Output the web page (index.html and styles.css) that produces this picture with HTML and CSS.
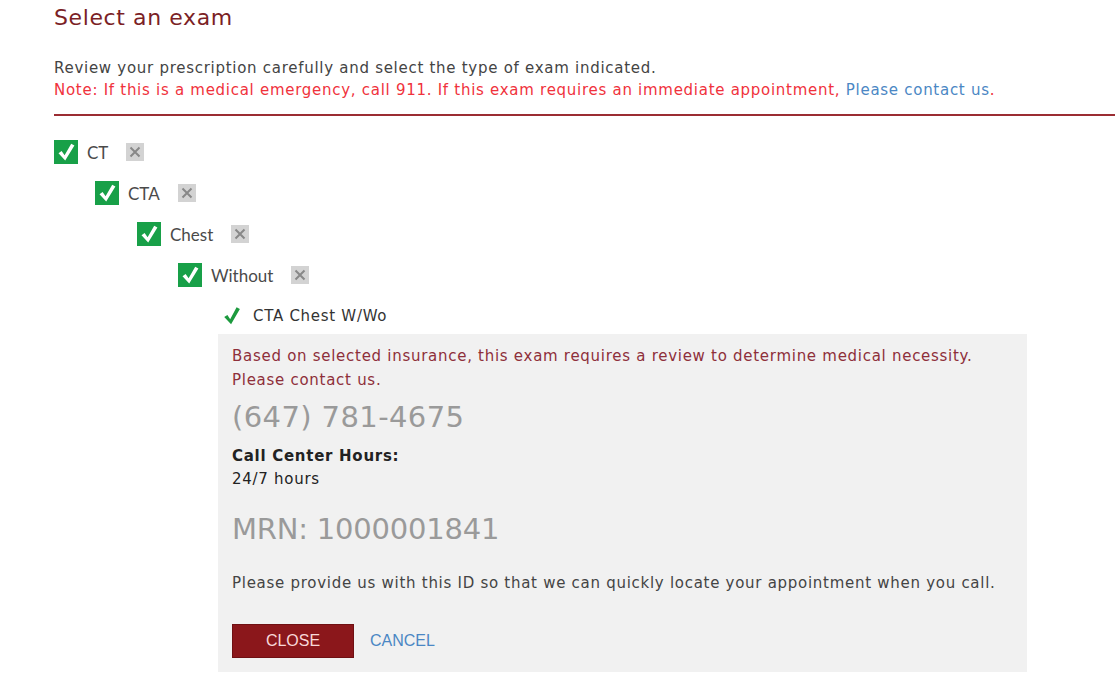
FILE: index.html
```html
<!DOCTYPE html>
<html lang="en">
<head>
    <meta charset="UTF-8">
    <meta name="viewport" content="width=device-width, initial-scale=1.0">
    <title>Select an exam</title>
    <link rel="stylesheet" href="styles.css">
</head>
<body>

    <div id="header">
        <h1>Select an exam</h1>
        <div class="intro">
            <p>Review your prescription carefully and select the type of exam indicated.</p>
            <p class="note">Note: If this is a medical emergency, call 911. If this exam requires an immediate appointment, <a href="#">Please contact us</a>.</p>
        </div>
    </div>

    <div id="tree">
        <div class="row lvl0">
            <span class="box"><svg viewBox="0 0 24 24" width="24" height="24"><path d="M4.5 13.2 L7.6 11 L10.6 15.3 L17.2 3.8 L20.4 5.6 L11.2 20.4 Z" fill="#fff"/></svg></span>
            <span class="label">CT</span>
            <span class="remove"><svg viewBox="0 0 18 18" width="18" height="18"><path d="M4.5 4.5 L13.5 13.5 M13.5 4.5 L4.5 13.5" stroke="#888" stroke-width="2"/></svg></span>
        </div>
        <div class="row lvl1">
            <span class="box"><svg viewBox="0 0 24 24" width="24" height="24"><path d="M4.5 13.2 L7.6 11 L10.6 15.3 L17.2 3.8 L20.4 5.6 L11.2 20.4 Z" fill="#fff"/></svg></span>
            <span class="label">CTA</span>
            <span class="remove"><svg viewBox="0 0 18 18" width="18" height="18"><path d="M4.5 4.5 L13.5 13.5 M13.5 4.5 L4.5 13.5" stroke="#888" stroke-width="2"/></svg></span>
        </div>
        <div class="row lvl2">
            <span class="box"><svg viewBox="0 0 24 24" width="24" height="24"><path d="M4.5 13.2 L7.6 11 L10.6 15.3 L17.2 3.8 L20.4 5.6 L11.2 20.4 Z" fill="#fff"/></svg></span>
            <span class="label">Chest</span>
            <span class="remove"><svg viewBox="0 0 18 18" width="18" height="18"><path d="M4.5 4.5 L13.5 13.5 M13.5 4.5 L4.5 13.5" stroke="#888" stroke-width="2"/></svg></span>
        </div>
        <div class="row lvl3">
            <span class="box"><svg viewBox="0 0 24 24" width="24" height="24"><path d="M4.5 13.2 L7.6 11 L10.6 15.3 L17.2 3.8 L20.4 5.6 L11.2 20.4 Z" fill="#fff"/></svg></span>
            <span class="label">Without</span>
            <span class="remove"><svg viewBox="0 0 18 18" width="18" height="18"><path d="M4.5 4.5 L13.5 13.5 M13.5 4.5 L4.5 13.5" stroke="#888" stroke-width="2"/></svg></span>
        </div>

        <div class="result lvl4">
            <div class="selected">
                <svg viewBox="0 0 24 24" width="22" height="22"><path d="M3.5 13.2 L7 11 L10 15.5 L17 2.5 L20.6 4.4 L11 21 Z" fill="#1c9a3e"/></svg>
                <span>CTA Chest W/Wo</span>
            </div>

            <div id="panel">
                <p class="warn">Based on selected insurance, this exam requires a review to determine medical necessity.<br>Please contact us.</p>
                <p class="big phone">(647) 781-4675</p>
                <p class="hours"><b>Call Center Hours:</b><br>24/7 hours</p>
                <p class="big mrn">MRN: 1000001841</p>
                <p class="info">Please provide us with this ID so that we can quickly locate your appointment when you call.</p>
                <div class="actions">
                    <button class="close">CLOSE</button>
                    <a href="#" class="cancel">CANCEL</a>
                </div>
            </div>
        </div>
    </div>

</body>
</html>
```

FILE: styles.css
```css
body {
    margin: 0;
    font-family: "DejaVu Sans", Verdana, sans-serif;
    font-size: 15px;
    letter-spacing: 0.72px;
    color: #444;
    background-color: white;
}

p {
    margin: 0;
}

a {
    color: #4b87c4;
    text-decoration: none;
}

#header {
    margin-left: 54px;
    padding-top: 4px;
    border-bottom: 2px solid #9b2d33;
}

h1 {
    margin: 0;
    font-size: 22px;
    font-weight: normal;
    letter-spacing: 0.6px;
    line-height: 28px;
    color: #7b1f26;
}

.intro {
    margin-top: 25px;
    padding-bottom: 13px;
    line-height: 22px;
}

.note {
    color: #f0323c;
}

#tree {
    padding: 24px 0 0 54px;
}

.row {
    display: flex;
    align-items: center;
    height: 24px;
    margin-bottom: 17px;
}

.lvl1 { margin-left: 41px; }
.lvl2 { margin-left: 83px; }
.lvl3 { margin-left: 124px; }
.lvl4 { margin-left: 164px; }

.box {
    display: flex;
    width: 24px;
    height: 24px;
    background-color: #18a048;
}

.label {
    margin-left: 9px;
    font-family: Lato, "Open Sans", sans-serif;
    font-size: 17px;
    letter-spacing: 0;
    color: #4a4a4a;
}

.remove {
    display: flex;
    margin-left: 18px;
    width: 18px;
    height: 18px;
    background-color: #d3d3d3;
}

.selected {
    display: flex;
    align-items: center;
    gap: 10px;
    height: 24px;
    padding-left: 3px;
    color: #333;
}

#panel {
    width: 809px;
    margin-top: 6px;
    padding: 10px 14px 14px 14px;
    box-sizing: border-box;
    background-color: #f1f1f1;
    line-height: 24px;
}

.warn {
    color: #8e2f3a;
}

.big {
    font-size: 29px;
    letter-spacing: 0.4px;
    line-height: 36px;
    color: #9a9a9a;
}

.phone {
    margin-top: 7px;
}

.hours {
    margin-top: 10px;
    line-height: 23px;
    color: #222;
}

.mrn {
    margin-top: 20px;
    letter-spacing: -0.2px;
}

.info {
    margin-top: 24px;
    color: #444;
}

.actions {
    display: flex;
    align-items: center;
    gap: 16px;
    margin-top: 29px;
}

.close {
    width: 122px;
    height: 34px;
    background-color: #8b171b;
    border: 1px solid #6f1013;
    color: #f8d8d8;
    font-family: "Liberation Sans", Arial, sans-serif;
    font-size: 16px;
    letter-spacing: 0;
    cursor: pointer;
}

.cancel {
    font-family: "Liberation Sans", Arial, sans-serif;
    font-size: 16px;
    letter-spacing: 0;
}
```
